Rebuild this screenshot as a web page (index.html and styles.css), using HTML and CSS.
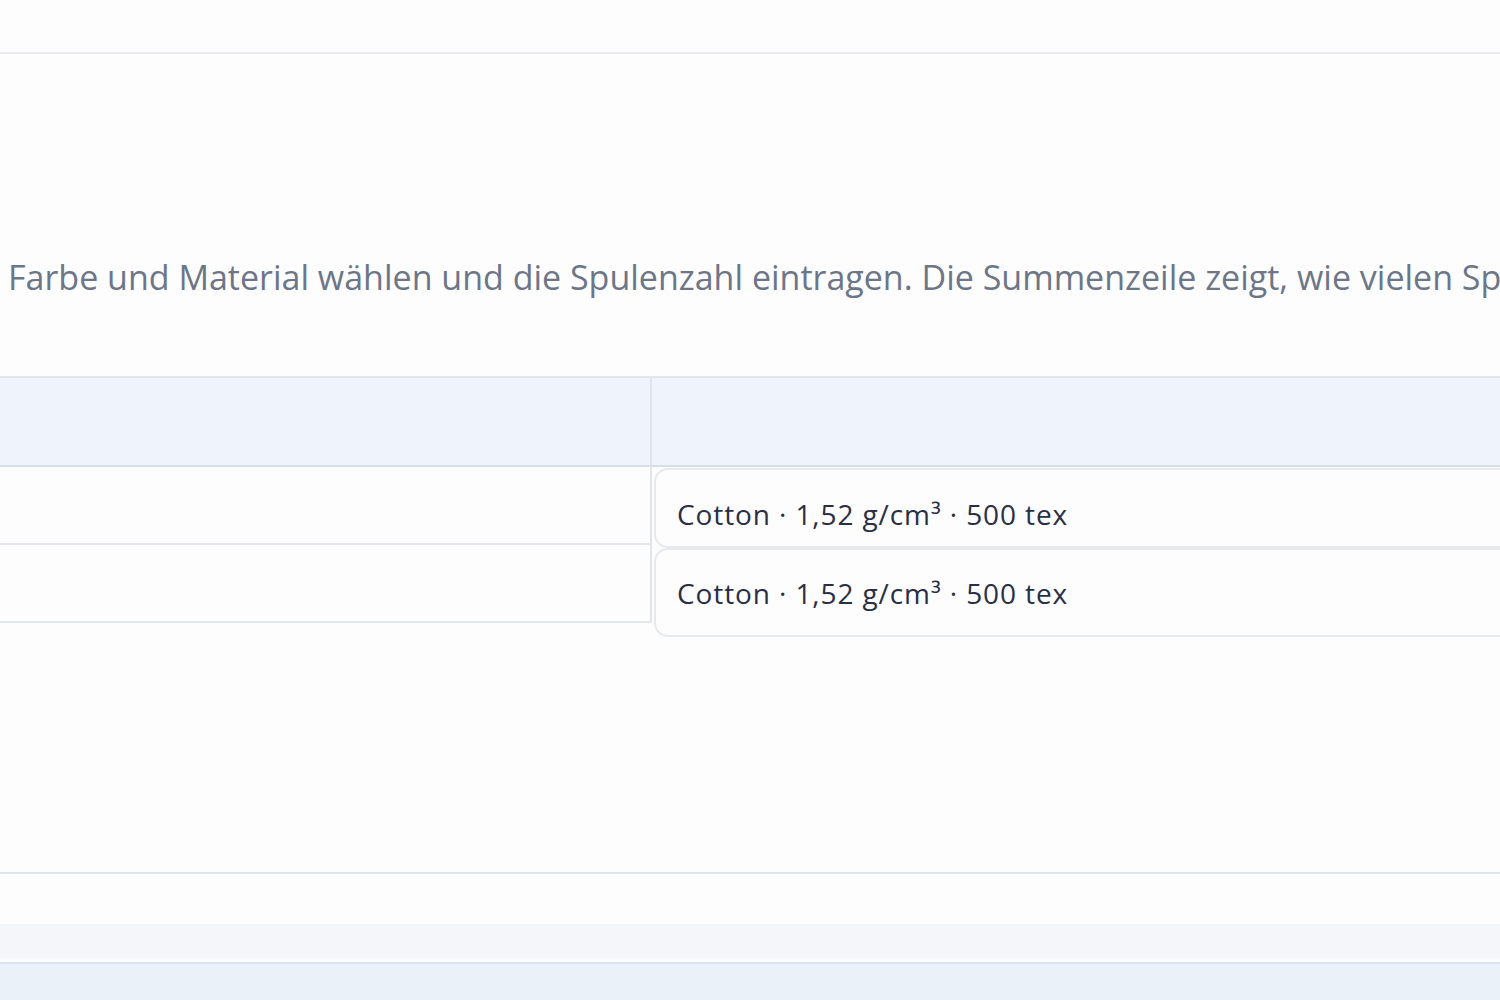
FILE: index.html
```html
<!DOCTYPE html>
<html lang="de">
<head>
<meta charset="utf-8">
<title>Spulen</title>
<link rel="stylesheet" href="styles.css">
</head>
<body>
<div class="page">
  <header class="topbar"></header>
  <p class="intro">Farbe und Material wählen und die Spulenzahl eintragen. Die Summenzeile zeigt, wie vielen Spulen das entspricht.</p>
  <section class="table">
    <div class="thead">
      <div class="th th-left"></div>
      <div class="th th-right"></div>
    </div>
    <div class="tbody">
      <div class="col-left">
        <div class="cell cell-1"></div>
        <div class="cell cell-2"></div>
      </div>
      <div class="col-right">
        <div class="pick pick-1">Cotton · 1,52 g/cm³ · 500 tex</div>
        <div class="pick pick-2">Cotton · 1,52 g/cm³ · 500 tex</div>
      </div>
    </div>
  </section>
  <div class="spacer"></div>
  <footer class="footer">
    <div class="foot-white"></div>
    <div class="foot-band"></div>
    <div class="foot-gap"></div>
    <div class="foot-bottom"></div>
  </footer>
</div>
</body>
</html>
```

FILE: styles.css
```css
html, body {
  margin: 0;
  padding: 0;
  background: #fdfdfd;
  overflow: hidden;
}
.page {
  width: 1500px;
  height: 1000px;
  overflow: hidden;
  font-family: "Open Sans", "Noto Sans", sans-serif;
}
.topbar {
  height: 52px;
  border-bottom: 2px solid #e8e9ec;
  background: #fdfdfd;
}
.intro {
  margin: 199px 0 0 8px;
  height: 48px;
  line-height: 48px;
  font-size: 34px;
  letter-spacing: 0;
  color: #6c7688;
  white-space: nowrap;
}
.table {
  margin-top: 75px;
  border-top: 2px solid #e3e7ec;
}
.thead {
  display: flex;
  height: 87px;
  background: #eff4fc;
  border-bottom: 2px solid #d6dee8;
}
.th-left {
  width: 650px;
  border-right: 2px solid #dfe5ed;
}
.th-right {
  flex: 1;
}
.tbody {
  display: flex;
  align-items: flex-start;
}
.col-left {
  width: 650px;
  border-right: 2px solid #e1e6ed;
  flex-shrink: 0;
}
.cell {
  height: 76px;
  border-bottom: 2px solid #e4e7ec;
  background: #fdfdfd;
}
.col-right {
  display: flex;
  flex-direction: column;
  padding-left: 2px;
  padding-top: 1px;
}
.pick {
  width: 1000px;
  box-sizing: border-box;
  border: 2px solid #e6e9ee;
  border-radius: 14px;
  background: #fdfdfd;
  padding-left: 21px;
  font-size: 28px;
  letter-spacing: 0.9px;
  color: #2a2f45;
  display: flex;
  align-items: center;
}
.pick-1 {
  height: 80px;
  padding-top: 11px;
}
.pick-2 {
  height: 89px;
}
.spacer {
  height: 235px;
}
.footer {
  border-top: 2px solid #dde5ef;
}
.foot-white {
  height: 50px;
  background: #fdfdfd;
}
.foot-band {
  height: 34px;
  background: #f4f6f9;
}
.foot-gap {
  height: 4px;
  background: #fbfcfd;
}
.foot-bottom {
  height: 60px;
  border-top: 2px solid #dbe4ef;
  background: #ebf1f9;
}
```
